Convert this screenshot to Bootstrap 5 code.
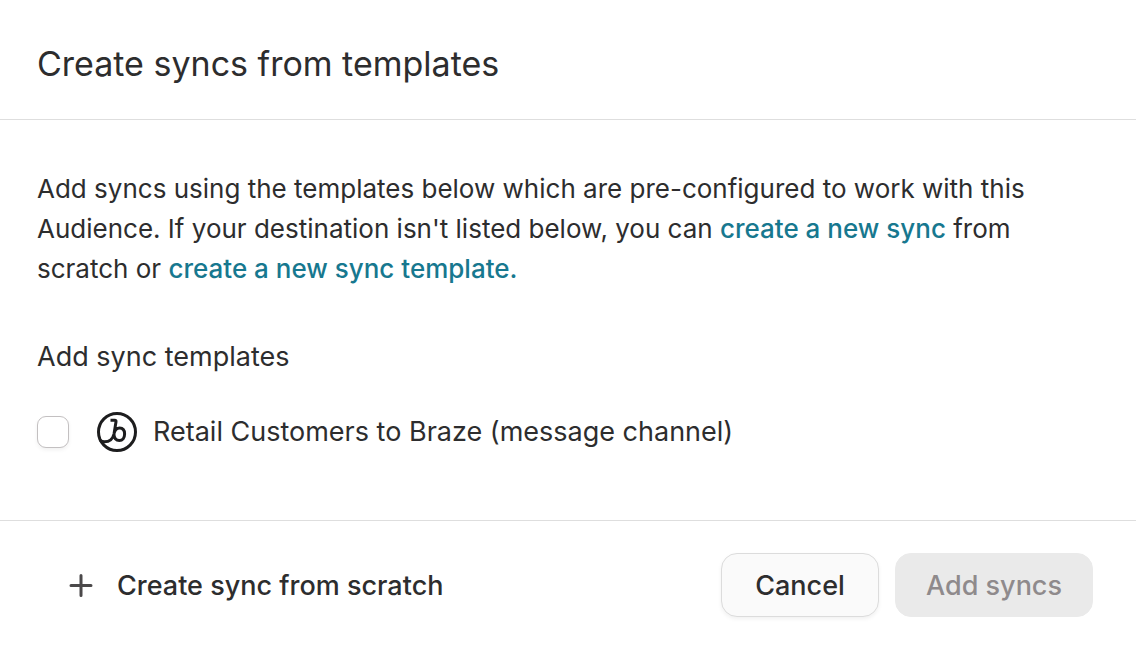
<!DOCTYPE html>
<html lang="en">
<head>
<meta charset="utf-8">
<meta name="viewport" content="width=device-width, initial-scale=1">
<title>Create syncs from templates</title>
<link href="https://cdn.jsdelivr.net/npm/bootstrap@5.3.0/dist/css/bootstrap.min.css" rel="stylesheet">
<style>
  body { font-family: Inter, "Liberation Sans", sans-serif; font-size: 27px; line-height: 40px; color: #2d2d2e; background: #fff; }
  .dialog-title { font-size: 34px; line-height: 48px; font-weight: 400; }
  .dialog-head { padding: 40px 37px 31px; border-bottom: 1px solid #dedede; }
  .dialog-main { padding: 49px 37px 68px; }
  .dialog-foot { padding: 32px 43px 32px 37px; border-top: 1px solid #dedede; }
  .intro { font-size: 26px; margin-bottom: 48px; }
  .intro a { color: #17788f; font-weight: 500; text-decoration: none; }
  .group-title { font-size: 27px; line-height: 40px; font-weight: 400; margin-bottom: 35px; }
  .sync-check { width: 32px; height: 32px; margin: 0 28px 0 0; border: 1px solid #c3c0c1; box-shadow: 0 2px 4px rgba(0,0,0,.06); }
  .sync-check.form-check-input[type=checkbox] { border-radius: 9px; }
  .dialog-btn { height: 64px; padding: 2px 31px 0; border-radius: 16px; font-size: 27px; line-height: 40px; font-weight: 500; }
  .btn-cancel { min-width: 158px; --bs-btn-color: #2d2d2e; --bs-btn-bg: #fafafa; --bs-btn-border-color: #dcdcdc; box-shadow: 0 2px 4px rgba(0,0,0,.06); }
  .btn-add { padding: 2px 30px 0; --bs-btn-disabled-color: #8f8a8c; --bs-btn-disabled-bg: #eaeaea; --bs-btn-disabled-border-color: #eaeaea; --bs-btn-disabled-opacity: 1; }
  .btn-scratch { --bs-btn-color: #2d2d2e; }
</style>
</head>
<body>
<main>
  <header class="dialog-head">
    <h1 class="dialog-title mb-0">Create syncs from templates</h1>
  </header>
  <section class="dialog-main">
    <p class="intro">Add syncs using the templates below which are pre-configured to work with this Audience. If your destination isn't listed below, you can <a href="#new-sync">create a new sync</a> from scratch or <a href="#new-template">create a new sync template.</a></p>
    <h2 class="group-title">Add sync templates</h2>
    <div class="d-flex align-items-center">
      <input class="form-check-input sync-check flex-shrink-0" type="checkbox" id="braze">
      <label class="d-flex align-items-center gap-3" for="braze">
        <svg class="flex-shrink-0" width="40" height="40" viewBox="0 0 40 40" fill="none" stroke="#1d1d1e" stroke-width="3" aria-hidden="true">
          <circle cx="20" cy="20" r="18.5"/>
          <path stroke-linejoin="round" d="M13.500 8.300H17.800Q19.300 8.300 19 9.800L17 22C15.800 27 12 29.800 7.500 29.800Q5 29.800 3 28.200M17.200 21C18 17.500 20 16 22.600 16C25.600 16 27.600 18.200 27.600 22C27.600 26 25.400 28.600 22.400 28.600C19 28.600 16.800 26 17 22"/>
        </svg>
        <span>Retail Customers to Braze (message channel)</span>
      </label>
    </div>
  </section>
  <footer class="dialog-foot d-flex align-items-center gap-3">
    <button type="button" class="btn btn-scratch dialog-btn d-flex align-items-center gap-4 me-auto">
      <svg width="24" height="24" viewBox="0 0 24 24" fill="none" stroke="#4b494a" stroke-width="3" stroke-linecap="round" aria-hidden="true"><path d="M12 1.500V21.500M2 11.500H22"/></svg>
      <span>Create sync from scratch</span>
    </button>
    <button type="button" class="btn btn-cancel dialog-btn">Cancel</button>
    <button type="button" class="btn dialog-btn btn-add" disabled>Add syncs</button>
  </footer>
</main>
<script src="https://cdn.jsdelivr.net/npm/bootstrap@5.3.0/dist/js/bootstrap.bundle.min.js"></script>
</body>
</html>
